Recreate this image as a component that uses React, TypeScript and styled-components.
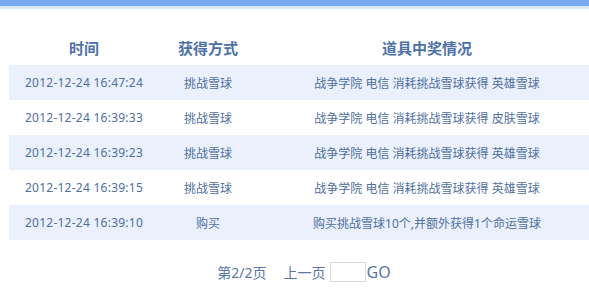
import styled, { createGlobalStyle } from "styled-components";

const GlobalStyle = createGlobalStyle`
  html, body {
    margin: 0;
    padding: 0;
    background: #ffffff;
    overflow: hidden;
  }
  body {
    font-family: "Noto Sans", "Noto Sans CJK SC", sans-serif;
  }
`;

type Record = { time: string; way: string; detail: string };

const records: Record[] = [
  { time: "2012-12-24 16:47:24", way: "挑战雪球", detail: "战争学院 电信 消耗挑战雪球获得 英雄雪球" },
  { time: "2012-12-24 16:39:33", way: "挑战雪球", detail: "战争学院 电信 消耗挑战雪球获得 皮肤雪球" },
  { time: "2012-12-24 16:39:23", way: "挑战雪球", detail: "战争学院 电信 消耗挑战雪球获得 英雄雪球" },
  { time: "2012-12-24 16:39:15", way: "挑战雪球", detail: "战争学院 电信 消耗挑战雪球获得 英雄雪球" },
  { time: "2012-12-24 16:39:10", way: "购买", detail: "购买挑战雪球10个,并额外获得1个命运雪球" },
];

const App = () => {
  return (
    <Page>
      <GlobalStyle />
      <TopBar />
      <Content>
        <Table>
          <HeadRow>
            <HeadCell>时间</HeadCell>
            <HeadCell>获得方式</HeadCell>
            <HeadCell>道具中奖情况</HeadCell>
          </HeadRow>
          {records.map((r, i) => (
            <Row key={i} $shaded={i % 2 === 0}>
              <Cell $spaced>{r.time}</Cell>
              <Cell>{r.way}</Cell>
              <Cell>{r.detail}</Cell>
            </Row>
          ))}
        </Table>
        <Pager>
          <PagerText>第2/2页</PagerText>
          <PagerLink>上一页</PagerLink>
          <PageInput />
          <GoButton>GO</GoButton>
        </Pager>
      </Content>
    </Page>
  );
};

const Page = styled.div`
  width: 589px;
  height: 308px;
  overflow: hidden;
`;

const TopBar = styled.div`
  height: 6px;
  background: #79a8ee;
  border-bottom: 3px solid #dbe8fc;
`;

const Content = styled.div`
  padding: 21px 0 0 9px;
`;

const Table = styled.div`
  width: 588px;
  display: grid;
  grid-template-columns: 150px 98px 1fr;
`;

const HeadRow = styled.div`
  display: contents;
`;

const HeadCell = styled.div`
  height: 35px;
  display: flex;
  align-items: center;
  justify-content: center;
  font-size: 15px;
  font-weight: bold;
  color: #4d71a6;
`;

const Row = styled.div<{ $shaded: boolean }>`
  display: contents;
  & > div {
    background: ${(p) => (p.$shaded ? "#eaf1fc" : "#ffffff")};
  }
`;

const Cell = styled.div<{ $spaced?: boolean }>`
  height: 35px;
  display: flex;
  align-items: center;
  justify-content: center;
  font-size: 12px;
  letter-spacing: ${(p) => (p.$spaced ? "0.25px" : "0")};
  color: #4f6f9f;
  white-space: nowrap;
`;

const Pager = styled.div`
  display: flex;
  align-items: center;
  justify-content: center;
  margin-top: 21px;
  padding-left: 10px;
  font-size: 14px;
  color: #5877a8;
`;

const PagerText = styled.span`
  margin-right: 17px;
`;

const PagerLink = styled.span`
  margin-right: 4px;
`;

const PageInput = styled.input`
  width: 34px;
  height: 18px;
  padding: 0;
  border: 1px solid #d6dbe3;
  background: #fff;
`;

const GoButton = styled.span`
  font-size: 16px;
  margin-left: 1px;
`;

export default App;
